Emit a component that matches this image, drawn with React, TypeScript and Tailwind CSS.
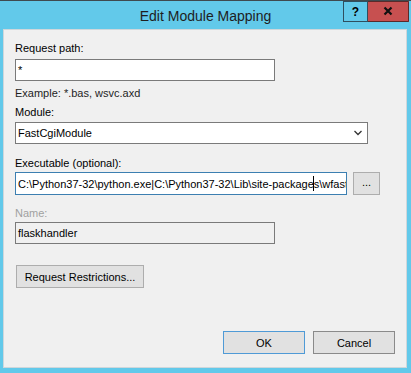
import React from 'react';

const font = { fontFamily: '"Liberation Sans", Arial, sans-serif' };

const Field = ({ value, className = '' }: { value: React.ReactNode; className?: string }) => (
  <div className={`flex h-[22px] items-center overflow-hidden whitespace-nowrap border border-[#7a7a7a] px-[2px] text-black ${className}`}>
    {value}
  </div>
);

const Button = ({ label, className = '' }: { label: string; className?: string }) => (
  <div className={`flex h-[23px] items-center justify-center border bg-[#e1e1e1] text-black ${className}`}>
    {label}
  </div>
);

// close button glyph, drawn like the Windows 8 caption button
const CloseButton = () => (
  <svg width="41" height="21" viewBox="0 0 41 21" className="block">
    <rect x="0" y="0" width="41" height="21" fill="#c75050" />
    <path d="M0 0.5 H40.5 V20.5 H0" fill="none" stroke="#5a2a2a" strokeWidth="1" />
    <path d="M16.5 6.5 L23.5 13.5 M23.5 6.5 L16.5 13.5" stroke="#111" strokeWidth="2.2" />
  </svg>
);

export default function App() {
  return (
    <div className="flex h-[373px] w-[411px] flex-col border-t border-[#3f4a50] bg-[#62c9ea]" style={font}>
      {/* title bar */}
      <div className="flex h-[28px] items-start">
        <div className="w-[68px]" />
        <div className="flex h-[28px] flex-1 items-center justify-center pt-[2px] text-[14px] text-[#1e1e1e]">Edit Module Mapping</div>
        <div className="flex h-[21px] w-[25px] items-center justify-center border border-[#2f4f5f] text-[12px] font-bold text-black">?</div>
        <CloseButton />
        <div className="w-[2px]" />
      </div>

      {/* content */}
      <div className="mb-[5px] ml-[3px] mr-[4px] flex flex-1 flex-col border border-[#cfd7db] bg-[#f0f0f0] pl-[11px] pt-[10px] text-[11px] leading-[16px] text-black">
        <div>Request path:</div>
        <Field value="*" className="mt-[3px] w-[260px] bg-white" />
        <div className="mt-[4px] text-[#1e1e1e]">Example: *.bas, wsvc.axd</div>

        <div className="mt-[3px]">Module:</div>
        <div className="mt-[2px] flex h-[22px] w-[353px] items-center justify-between border border-[#7a7a7a] bg-white pl-[2px] pr-[4px]">
          <span>FastCgiModule</span>
          <svg width="10" height="6" viewBox="0 0 10 6" fill="none" stroke="#333" strokeWidth="1.3">
            <path d="M1.5 1 L5 4.5 L8.5 1" />
          </svg>
        </div>

        <div className="mt-[11px]">Executable (optional):</div>
        <div className="mt-[1px] flex items-center">
          <div className="flex h-[23px] w-[332px] items-center overflow-hidden whitespace-nowrap border border-[#3c7fb1] bg-white px-[2px]">
            <span>C:\Python37-32\python.exe|C:\Python37-32\Lib\site-packag</span>
            <span>e</span>
            <span className="mx-[-0.5px] inline-block h-[15px] w-px shrink-0 bg-black" />
            <span>s\wfastcgi.py</span>
          </div>
          <Button label="..." className="ml-[6px] h-[22px] w-[27px] shrink-0 border-[#adadad] pb-[3px]" />
        </div>

        <div className="mt-[10px] text-[#a0a0a0]">Name:</div>
        <Field value="flaskhandler" className="mt-[1px] w-[260px] bg-[#f0f0f0]" />

        <Button label="Request Restrictions..." className="mt-[21px] ml-[1px] w-[128px] border-[#adadad]" />

        <div className="mt-[43px] flex gap-[8px] pl-[208px]">
          <Button label="OK" className="w-[82px] border-[#4f9ad6]" />
          <Button label="Cancel" className="w-[82px] border-[#8a8a8a]" />
        </div>
      </div>
    </div>
  );
}
